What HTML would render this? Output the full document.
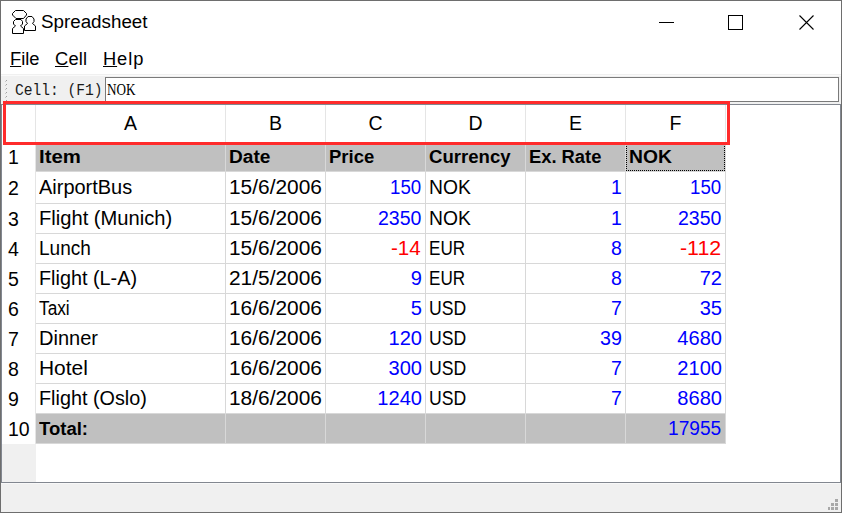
<!DOCTYPE html>
<html><head><meta charset="utf-8">
<style>
*{margin:0;padding:0;box-sizing:border-box}
html,body{width:842px;height:513px;overflow:hidden;background:#fff}
body{position:relative;font-family:"Liberation Sans",sans-serif;color:#000}
.a{position:absolute}
.t{position:absolute;white-space:nowrap;line-height:1}
.r{text-align:right}
.b{font-weight:bold;font-size:18.7px}
.n{font-size:19.5px}
.bl{color:#0000ff}
.rd{color:#ff0000}
.u{text-decoration:underline;text-underline-offset:2px}
</style></head><body>

<div class="a" style="left:0;top:0;width:842px;height:1px;background:#6e6e6e"></div>
<div class="a" style="left:0;top:0;width:1px;height:513px;background:#6e6e6e"></div>
<div class="a" style="left:841px;top:0;width:1px;height:513px;background:#6e6e6e"></div>
<div class="a" style="left:0;top:512px;width:842px;height:1px;background:#6e6e6e"></div>
<svg class="a" style="left:10px;top:8px" width="28" height="28" viewBox="10 8 28 28" fill="#fff" stroke="#000" stroke-width="1">
<path d="M15.5 10.5H23.5L26.5 13.5V15L23.5 18.5H16L12.5 15V13.5Z"/>
<path d="M24.5 30.5V26L27.5 23.5L26 21.5V19L28 16.5H32L34 19V21.5L32.5 23.5L35.5 26V30.5Z"/>
<path d="M12.5 33.5V28.5L15.5 26L13.5 24V21.5L15.5 19.5H21L22.5 21.5V24L20.5 26L23.5 28.5V33.5Z"/>
</svg>
<div class="t" style="left:41px;top:13.3px;font-size:18.8px">Spreadsheet</div>
<div class="a" style="left:659px;top:22px;width:15px;height:1px;background:#000"></div>
<div class="a" style="left:728px;top:15px;width:15px;height:15px;border:1px solid #000"></div>
<svg class="a" style="left:799px;top:15px" width="15" height="15" viewBox="0 0 15 15"><path d="M0.5 0.5L14.5 14.5M14.5 0.5L0.5 14.5" stroke="#000" stroke-width="1.1"/></svg>
<div class="t" style="left:10px;top:50px;font-size:18.3px;letter-spacing:0px"><span style="text-decoration:underline">F</span>ile</div>
<div class="t" style="left:55px;top:50px;font-size:18.3px;letter-spacing:0.2px"><span style="text-decoration:underline">C</span>ell</div>
<div class="t" style="left:103px;top:50px;font-size:18.3px;letter-spacing:0.9px"><span style="text-decoration:underline">H</span>elp</div>
<div class="a" style="left:1px;top:74px;width:840px;height:30px;background:#f0f0f0"></div>
<div class="a" style="left:1px;top:75px;width:840px;height:1px;background:#fafafa"></div>
<div class="t" style="left:15px;top:82px;font-family:'Liberation Mono',monospace;font-size:14.6px;transform:scaleY(1.16);transform-origin:0 0;color:#1a1a1a">Cell: (F1)</div>
<div class="a" style="left:6px;top:80px;width:1px;height:1px;background:#a0a0a0"></div><div class="a" style="left:5px;top:81px;width:1px;height:1px;background:#c8c8c8"></div>
<div class="a" style="left:6px;top:84px;width:1px;height:1px;background:#a0a0a0"></div><div class="a" style="left:5px;top:85px;width:1px;height:1px;background:#c8c8c8"></div>
<div class="a" style="left:6px;top:88px;width:1px;height:1px;background:#a0a0a0"></div><div class="a" style="left:5px;top:89px;width:1px;height:1px;background:#c8c8c8"></div>
<div class="a" style="left:6px;top:92px;width:1px;height:1px;background:#a0a0a0"></div><div class="a" style="left:5px;top:93px;width:1px;height:1px;background:#c8c8c8"></div>
<div class="a" style="left:6px;top:96px;width:1px;height:1px;background:#a0a0a0"></div><div class="a" style="left:5px;top:97px;width:1px;height:1px;background:#c8c8c8"></div>
<div class="a" style="left:6px;top:100px;width:1px;height:1px;background:#a0a0a0"></div><div class="a" style="left:5px;top:101px;width:1px;height:1px;background:#c8c8c8"></div>
<div class="a" style="left:105px;top:77px;width:734px;height:25px;background:#fff;border:1px solid #7a7a7a"></div>
<div class="t" style="left:107px;top:82px;font-family:'Liberation Serif',serif;font-size:16px;transform:scaleX(0.82);transform-origin:0 0">NOK</div>
<div class="a" style="left:1px;top:104px;width:840px;height:379px;border:1px solid #828790;background:#fff"></div>
<div class="a" style="left:2px;top:444px;width:34px;height:38px;background:#f0f0f0"></div>
<div class="a" style="left:35px;top:105px;width:1px;height:37px;background:#e5e5e5"></div>
<div class="a" style="left:225px;top:105px;width:1px;height:37px;background:#e5e5e5"></div>
<div class="a" style="left:325px;top:105px;width:1px;height:37px;background:#e5e5e5"></div>
<div class="a" style="left:425px;top:105px;width:1px;height:37px;background:#e5e5e5"></div>
<div class="a" style="left:525px;top:105px;width:1px;height:37px;background:#e5e5e5"></div>
<div class="a" style="left:625px;top:105px;width:1px;height:37px;background:#e5e5e5"></div>
<div class="a" style="left:725px;top:105px;width:1px;height:37px;background:#e5e5e5"></div>
<div class="a" style="left:35px;top:145px;width:1px;height:299px;background:#e5e5e5"></div>
<div class="t" style="left:36px;top:113.7px;width:189px;text-align:center;font-size:19.5px">A</div>
<div class="t" style="left:226px;top:113.7px;width:99px;text-align:center;font-size:19.5px">B</div>
<div class="t" style="left:326px;top:113.7px;width:99px;text-align:center;font-size:19.5px">C</div>
<div class="t" style="left:426px;top:113.7px;width:99px;text-align:center;font-size:19.5px">D</div>
<div class="t" style="left:526px;top:113.7px;width:99px;text-align:center;font-size:19.5px">E</div>
<div class="t" style="left:626px;top:113.7px;width:99px;text-align:center;font-size:19.5px">F</div>
<div class="a" style="left:36px;top:142px;width:690px;height:29px;background:#c0c0c0"></div>
<div class="a" style="left:36px;top:414px;width:690px;height:29px;background:#c0c0c0"></div>
<div class="a" style="left:36px;top:171px;width:690px;height:1px;background:#d8d8d8"></div>
<div class="a" style="left:36px;top:203px;width:690px;height:1px;background:#d8d8d8"></div>
<div class="a" style="left:36px;top:233px;width:690px;height:1px;background:#d8d8d8"></div>
<div class="a" style="left:36px;top:263px;width:690px;height:1px;background:#d8d8d8"></div>
<div class="a" style="left:36px;top:293px;width:690px;height:1px;background:#d8d8d8"></div>
<div class="a" style="left:36px;top:323px;width:690px;height:1px;background:#d8d8d8"></div>
<div class="a" style="left:36px;top:353px;width:690px;height:1px;background:#d8d8d8"></div>
<div class="a" style="left:36px;top:383px;width:690px;height:1px;background:#d8d8d8"></div>
<div class="a" style="left:36px;top:413px;width:690px;height:1px;background:#d8d8d8"></div>
<div class="a" style="left:36px;top:443px;width:690px;height:1px;background:#d8d8d8"></div>
<div class="a" style="left:225px;top:142px;width:1px;height:302px;background:#d8d8d8"></div>
<div class="a" style="left:325px;top:142px;width:1px;height:302px;background:#d8d8d8"></div>
<div class="a" style="left:425px;top:142px;width:1px;height:302px;background:#d8d8d8"></div>
<div class="a" style="left:525px;top:142px;width:1px;height:302px;background:#d8d8d8"></div>
<div class="a" style="left:625px;top:142px;width:1px;height:302px;background:#d8d8d8"></div>
<div class="a" style="left:725px;top:142px;width:1px;height:302px;background:#d8d8d8"></div>
<div class="t" style="left:8px;top:147.8px;font-size:19.5px">1</div>
<div class="t" style="left:8px;top:178.8px;font-size:19.5px">2</div>
<div class="t" style="left:8px;top:209.8px;font-size:19.5px">3</div>
<div class="t" style="left:8px;top:239.8px;font-size:19.5px">4</div>
<div class="t" style="left:8px;top:269.8px;font-size:19.5px">5</div>
<div class="t" style="left:8px;top:299.8px;font-size:19.5px">6</div>
<div class="t" style="left:8px;top:329.8px;font-size:19.5px">7</div>
<div class="t" style="left:8px;top:359.8px;font-size:19.5px">8</div>
<div class="t" style="left:8px;top:389.8px;font-size:19.5px">9</div>
<div class="t" style="left:8px;top:419.8px;font-size:19.5px">10</div>
<div class="t b" style="left:38.71px;top:147.5px;transform:scaleX(1.089);transform-origin:0 0">Item</div>
<div class="t b" style="left:228.98px;top:147.5px;transform:scaleX(1.023);transform-origin:0 0">Date</div>
<div class="t b" style="left:329.01px;top:147.5px;transform:scaleX(0.989);transform-origin:0 0">Price</div>
<div class="t b" style="left:429.01px;top:147.5px;transform:scaleX(0.994);transform-origin:0 0">Currency</div>
<div class="t b" style="left:529.02px;top:147.5px;transform:scaleX(0.981);transform-origin:0 0">Ex. Rate</div>
<div class="t b" style="left:628.97px;top:147.5px;transform:scaleX(1.032);transform-origin:0 0">NOK</div>
<div class="t n" style="left:39.10px;top:178.0px;transform:scaleX(1.023);transform-origin:0 0">AirportBus</div>
<div class="t n" style="left:228.93px;top:178.0px;transform:scaleX(1.071);transform-origin:0 0">15/6/2006</div>
<div class="t n bl" style="left:390.34px;top:178.0px;transform:scaleX(0.958);transform-origin:0 0">150</div>
<div class="t n" style="left:429.02px;top:178.0px;transform:scaleX(0.988);transform-origin:0 0">NOK</div>
<div class="t n bl" style="left:611.00px;top:178.0px;transform:scaleX(1.000);transform-origin:0 0">1</div>
<div class="t n bl" style="left:690.34px;top:178.0px;transform:scaleX(0.958);transform-origin:0 0">150</div>
<div class="t n" style="left:38.93px;top:209.0px;transform:scaleX(1.033);transform-origin:0 0">Flight (Munich)</div>
<div class="t n" style="left:228.93px;top:209.0px;transform:scaleX(1.071);transform-origin:0 0">15/6/2006</div>
<div class="t n bl" style="left:377.90px;top:209.0px;transform:scaleX(1.002);transform-origin:0 0">2350</div>
<div class="t n" style="left:429.02px;top:209.0px;transform:scaleX(0.988);transform-origin:0 0">NOK</div>
<div class="t n bl" style="left:611.00px;top:209.0px;transform:scaleX(1.000);transform-origin:0 0">1</div>
<div class="t n bl" style="left:677.90px;top:209.0px;transform:scaleX(1.002);transform-origin:0 0">2350</div>
<div class="t n" style="left:39.04px;top:239.0px;transform:scaleX(0.978);transform-origin:0 0">Lunch</div>
<div class="t n" style="left:228.93px;top:239.0px;transform:scaleX(1.071);transform-origin:0 0">15/6/2006</div>
<div class="t n rd" style="left:391.44px;top:239.0px;transform:scaleX(1.056);transform-origin:0 0">-14</div>
<div class="t n" style="left:429.25px;top:239.0px;transform:scaleX(0.876);transform-origin:0 0">EUR</div>
<div class="t n bl" style="left:611.00px;top:239.0px;transform:scaleX(1.000);transform-origin:0 0">8</div>
<div class="t n rd" style="left:680.40px;top:239.0px;transform:scaleX(1.097);transform-origin:0 0">-112</div>
<div class="t n" style="left:38.97px;top:269.0px;transform:scaleX(1.016);transform-origin:0 0">Flight (L-A)</div>
<div class="t n" style="left:228.93px;top:269.0px;transform:scaleX(1.071);transform-origin:0 0">21/5/2006</div>
<div class="t n bl r" style="left:326px;top:269.0px;width:96px;transform:scaleX(1.030);transform-origin:100% 0">9</div>
<div class="t n" style="left:429.25px;top:269.0px;transform:scaleX(0.876);transform-origin:0 0">EUR</div>
<div class="t n bl" style="left:611.00px;top:269.0px;transform:scaleX(1.000);transform-origin:0 0">8</div>
<div class="t n bl r" style="left:626px;top:269.0px;width:96px;transform:scaleX(1.030);transform-origin:100% 0">72</div>
<div class="t n" style="left:39.20px;top:299.0px;transform:scaleX(0.885);transform-origin:0 0">Taxi</div>
<div class="t n" style="left:228.93px;top:299.0px;transform:scaleX(1.071);transform-origin:0 0">16/6/2006</div>
<div class="t n bl r" style="left:326px;top:299.0px;width:96px;transform:scaleX(1.030);transform-origin:100% 0">5</div>
<div class="t n" style="left:429.10px;top:299.0px;transform:scaleX(0.903);transform-origin:0 0">USD</div>
<div class="t n bl" style="left:611.00px;top:299.0px;transform:scaleX(1.000);transform-origin:0 0">7</div>
<div class="t n bl r" style="left:626px;top:299.0px;width:96px;transform:scaleX(1.030);transform-origin:100% 0">35</div>
<div class="t n" style="left:38.95px;top:329.0px;transform:scaleX(1.027);transform-origin:0 0">Dinner</div>
<div class="t n" style="left:228.93px;top:329.0px;transform:scaleX(1.071);transform-origin:0 0">16/6/2006</div>
<div class="t n bl r" style="left:326px;top:329.0px;width:96px;transform:scaleX(1.030);transform-origin:100% 0">120</div>
<div class="t n" style="left:429.10px;top:329.0px;transform:scaleX(0.903);transform-origin:0 0">USD</div>
<div class="t n bl" style="left:599.79px;top:329.0px;transform:scaleX(1.010);transform-origin:0 0">39</div>
<div class="t n bl r" style="left:626px;top:329.0px;width:96px;transform:scaleX(1.030);transform-origin:100% 0">4680</div>
<div class="t n" style="left:38.85px;top:359.0px;transform:scaleX(1.074);transform-origin:0 0">Hotel</div>
<div class="t n" style="left:228.93px;top:359.0px;transform:scaleX(1.071);transform-origin:0 0">16/6/2006</div>
<div class="t n bl r" style="left:326px;top:359.0px;width:96px;transform:scaleX(1.030);transform-origin:100% 0">300</div>
<div class="t n" style="left:429.10px;top:359.0px;transform:scaleX(0.903);transform-origin:0 0">USD</div>
<div class="t n bl" style="left:611.00px;top:359.0px;transform:scaleX(1.000);transform-origin:0 0">7</div>
<div class="t n bl r" style="left:626px;top:359.0px;width:96px;transform:scaleX(1.030);transform-origin:100% 0">2100</div>
<div class="t n" style="left:38.97px;top:389.0px;transform:scaleX(1.015);transform-origin:0 0">Flight (Oslo)</div>
<div class="t n" style="left:228.93px;top:389.0px;transform:scaleX(1.071);transform-origin:0 0">18/6/2006</div>
<div class="t n bl r" style="left:326px;top:389.0px;width:96px;transform:scaleX(1.030);transform-origin:100% 0">1240</div>
<div class="t n" style="left:429.10px;top:389.0px;transform:scaleX(0.903);transform-origin:0 0">USD</div>
<div class="t n bl" style="left:611.00px;top:389.0px;transform:scaleX(1.000);transform-origin:0 0">7</div>
<div class="t n bl r" style="left:626px;top:389.0px;width:96px;transform:scaleX(1.030);transform-origin:100% 0">8680</div>
<div class="t b" style="left:39.30px;top:419.5px;transform:scaleX(0.990);transform-origin:0 0">Total:</div>
<div class="t n bl" style="left:668.02px;top:419.0px;transform:scaleX(0.981);transform-origin:0 0">17955</div>
<div class="a" style="left:626px;top:142px;width:99px;height:29px;border:1px dotted #000"></div>
<div class="a" style="left:1px;top:483px;width:840px;height:29px;background:#f0f0f0"></div>
<div class="a" style="left:1px;top:483px;width:840px;height:1px;background:#f8f8f8"></div>
<div class="a" style="left:835px;top:499px;width:3px;height:3px;background:#a8a8a8"></div>
<div class="a" style="left:831px;top:503px;width:3px;height:3px;background:#a8a8a8"></div>
<div class="a" style="left:835px;top:503px;width:3px;height:3px;background:#a8a8a8"></div>
<div class="a" style="left:828px;top:507px;width:2px;height:3px;background:#a8a8a8"></div>
<div class="a" style="left:831px;top:507px;width:3px;height:3px;background:#a8a8a8"></div>
<div class="a" style="left:835px;top:507px;width:3px;height:3px;background:#a8a8a8"></div>
<div class="a" style="left:3px;top:101px;width:727px;height:44px;border:3px solid #ff2b2b"></div>
</body></html>
